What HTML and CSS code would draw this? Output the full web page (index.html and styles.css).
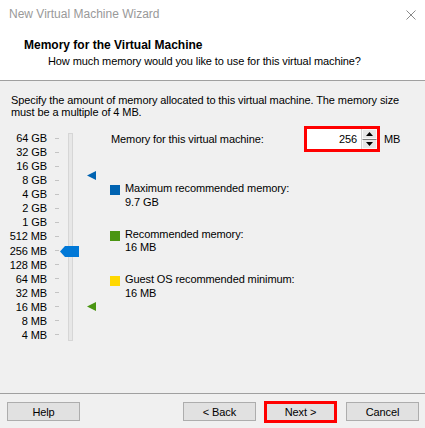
FILE: index.html
```html
<!DOCTYPE html>
<html>
<head>
<meta charset="utf-8">
<link rel="stylesheet" href="styles.css">
</head>
<body>
<div class="window">
  <div class="titlebar">
    <span class="title">New Virtual Machine Wizard</span>
    <svg class="close" width="10" height="10" viewBox="0 0 10 10"><path d="M0.5 0.5L9.5 9.5M9.5 0.5L0.5 9.5" stroke="#8a8a8a" stroke-width="1" fill="none"/></svg>
  </div>
  <div class="header">
    <div class="h-title">Memory for the Virtual Machine</div>
    <div class="h-sub">How much memory would you like to use for this virtual machine?</div>
  </div>
  <div class="body">
    <p class="desc">Specify the amount of memory allocated to this virtual machine. The memory size must be a multiple of 4 MB.</p>
    <div class="main">
      <div class="slider">
        <div class="labels">
          <div>64 GB</div><div>32 GB</div><div>16 GB</div><div>8 GB</div><div>4 GB</div><div>2 GB</div><div>1 GB</div><div>512 MB</div><div>256 MB</div><div>128 MB</div><div>64 MB</div><div>32 MB</div><div>16 MB</div><div>8 MB</div><div>4 MB</div>
        </div>
        <div class="ticks">
          <i></i><i></i><i></i><i></i><i></i><i></i><i></i><i></i><i></i><i></i><i></i><i></i><i></i><i></i><i></i>
        </div>
        <div class="track"></div>
        <svg class="marker marker-max" width="9" height="9" viewBox="0 0 9 9"><polygon points="0,4.5 9,0 9,9" fill="#0063b1"/></svg>
        <svg class="thumb" width="19" height="11" viewBox="0 0 19 11"><polygon points="0,5.5 5,0 19,0 19,11 5,11" fill="#0078d7"/></svg>
        <svg class="marker marker-rec" width="9" height="9" viewBox="0 0 9 9"><polygon points="0,4.5 9,0 9,9" fill="#4a9512"/></svg>
      </div>
      <div class="right">
        <div class="mem-row">
          <span class="mem-label">Memory for this virtual machine:</span>
          <div class="spinbox">
            <div class="spin-input">256</div>
            <div class="spin-btns">
              <div class="spin-btn"><svg width="7" height="4" viewBox="0 0 7 4"><polygon points="3.5,0 7,4 0,4" fill="#000"/></svg></div>
              <div class="spin-btn"><svg width="7" height="4" viewBox="0 0 7 4"><polygon points="0,0 7,0 3.5,4" fill="#000"/></svg></div>
            </div>
          </div>
          <span class="unit">MB</span>
        </div>
        <div class="legend">
          <div class="item"><span class="sq sq-blue"></span><div class="txt">Maximum recommended memory:<br>9.7 GB</div></div>
          <div class="item"><span class="sq sq-green"></span><div class="txt">Recommended memory:<br>16 MB</div></div>
          <div class="item"><span class="sq sq-yellow"></span><div class="txt">Guest OS recommended minimum:<br>16 MB</div></div>
        </div>
      </div>
    </div>
  </div>
  <div class="footer">
    <button class="btn">Help</button>
    <div class="spacer"></div>
    <button class="btn">&lt; Back</button>
    <button class="btn btn-next">Next &gt;</button>
    <button class="btn btn-cancel">Cancel</button>
  </div>
</div>
</body>
</html>
```
FILE: styles.css
```css
* { box-sizing: border-box; }
html, body { margin: 0; padding: 0; }
body {
  font-family: "Liberation Sans", Arial, sans-serif;
  font-size: 11px;
  letter-spacing: -0.1px;
  color: #000;
  background: #f0f0f0;
}
.window {
  width: 425px;
  height: 428px;
  display: flex;
  flex-direction: column;
  background: #f0f0f0;
  overflow: hidden;
}
.titlebar {
  height: 30px;
  background: #fff;
  display: flex;
  align-items: center;
  justify-content: space-between;
  padding: 0 9px 2px 9px;
  letter-spacing: 0;
}
.title {
  font-size: 12px;
  color: #999;
}
.close { margin-top: 1px; }
.header {
  background: #fff;
  height: 51px;
  padding-top: 7px;
  border-bottom: 1px solid #a0a0a0;
}
.h-title {
  font-weight: bold;
  font-size: 12px;
  letter-spacing: 0;
  line-height: 16px;
  padding-left: 24px;
}
.h-sub {
  line-height: 16px;
  padding-left: 48px;
}
.body {
  flex: 1;
  padding: 13px 0 0 11px;
}
.desc {
  margin: 0;
  line-height: 12px;
  width: 400px;
}
.main {
  display: flex;
  margin-top: 8px;
  margin-left: -11px;
}
.slider {
  position: relative;
  width: 110px;
  display: flex;
  padding-top: 5px;
}
.labels {
  width: 47px;
  text-align: right;
}
.labels div {
  height: 14.07px;
  line-height: 14.07px;
}
.ticks {
  margin-left: 8px;
  width: 4px;
}
.ticks i {
  display: flex;
  height: 14.07px;
  align-items: center;
}
.ticks i::before {
  content: "";
  display: block;
  width: 4px;
  height: 1px;
  background: #c4c4c4;
}
.track {
  margin-left: 9px;
  margin-top: 2px;
  width: 5px;
  height: 208px;
  background: #e7e7e7;
  border: 1px solid #d6d6d6;
}
.marker, .thumb { position: absolute; }
.marker-max { left: 87px; top: 45px; }
.marker-rec { left: 87px; top: 176px; }
.thumb { left: 60px; top: 120px; }
.right {
  flex: 1;
}
.mem-row {
  display: flex;
  align-items: center;
  height: 26px;
}
.mem-label {
  padding-left: 1px;
  width: 194px;
}
.spinbox {
  display: flex;
  width: 76px;
  height: 26px;
  border: 3px solid #f00;
  background: #fff;
}
.spin-input {
  width: 54px;
  text-align: right;
  padding-right: 4px;
  line-height: 20px;
}
.spin-btns {
  width: 16px;
  display: flex;
  flex-direction: column;
  background: #f0f0f0;
  border-left: 1px solid #d0d0d0;
}
.spin-btn {
  flex: 1;
  display: flex;
  align-items: center;
  justify-content: center;
  background: #e6e6e6;
  border: 1px solid #f8f8f8;
}
.spin-btn + .spin-btn { border-top: 1px solid #7a7a7a; }
.unit { margin-left: 4px; }
.legend {
  margin-top: 30px;
  display: flex;
  flex-direction: column;
  gap: 18.5px;
}
.item {
  display: flex;
  align-items: flex-start;
}
.sq {
  width: 10px;
  height: 10px;
  margin-top: 3px;
  margin-right: 5px;
  flex: none;
}
.sq-blue { background: #0063b1; }
.sq-green { background: #4a9512; }
.sq-yellow { background: #ffd800; }
.txt { line-height: 13.5px; }
.footer {
  height: 35px;
  border-top: 1px solid #a0a0a0;
  display: flex;
  align-items: center;
  padding: 0 6px 0 7px;
  gap: 8px;
}
.spacer { flex: 1; }
.btn {
  width: 73px;
  height: 19px;
  padding: 0;
  font-family: inherit;
  font-size: 11px;
  letter-spacing: -0.1px;
  color: #000;
  background: #e1e1e1;
  border: 1px solid #adadad;
  margin-top: 1px;
}
.btn-next {
  height: 22px;
  border: 3px solid #f00;
}
.btn-cancel { margin-left: 1px; }
```
